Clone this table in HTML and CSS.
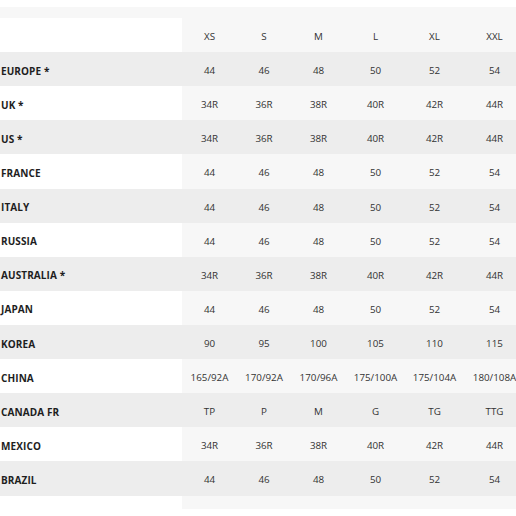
FILE: index.html
```html
<!DOCTYPE html>
<html>
<head>
<meta charset="utf-8">
<link rel="stylesheet" href="styles.css">
</head>
<body>
<div class="wrap">
  <div class="top-strip"></div>
  <table class="sizes">
    <colgroup>
      <col class="c-label">
      <col class="c1"><col class="c2"><col class="c3"><col class="c4"><col class="c5"><col class="c6">
    </colgroup>
    <thead>
      <tr class="light"><th class="label"></th><th>XS</th><th>S</th><th>M</th><th>L</th><th>XL</th><th>XXL</th></tr>
    </thead>
    <tbody>
      <tr class="dark"><th class="label">EUROPE *</th><td>44</td><td>46</td><td>48</td><td>50</td><td>52</td><td>54</td></tr>
      <tr class="light"><th class="label">UK *</th><td>34R</td><td>36R</td><td>38R</td><td>40R</td><td>42R</td><td>44R</td></tr>
      <tr class="dark"><th class="label">US *</th><td>34R</td><td>36R</td><td>38R</td><td>40R</td><td>42R</td><td>44R</td></tr>
      <tr class="light"><th class="label">FRANCE</th><td>44</td><td>46</td><td>48</td><td>50</td><td>52</td><td>54</td></tr>
      <tr class="dark"><th class="label">ITALY</th><td>44</td><td>46</td><td>48</td><td>50</td><td>52</td><td>54</td></tr>
      <tr class="light"><th class="label">RUSSIA</th><td>44</td><td>46</td><td>48</td><td>50</td><td>52</td><td>54</td></tr>
      <tr class="dark"><th class="label">AUSTRALIA *</th><td>34R</td><td>36R</td><td>38R</td><td>40R</td><td>42R</td><td>44R</td></tr>
      <tr class="light"><th class="label">JAPAN</th><td>44</td><td>46</td><td>48</td><td>50</td><td>52</td><td>54</td></tr>
      <tr class="dark"><th class="label">KOREA</th><td>90</td><td>95</td><td>100</td><td>105</td><td>110</td><td>115</td></tr>
      <tr class="light"><th class="label">CHINA</th><td>165/92A</td><td>170/92A</td><td>170/96A</td><td>175/100A</td><td>175/104A</td><td>180/108A</td></tr>
      <tr class="dark"><th class="label">CANADA FR</th><td>TP</td><td>P</td><td>M</td><td>G</td><td>TG</td><td>TTG</td></tr>
      <tr class="light"><th class="label">MEXICO</th><td>34R</td><td>36R</td><td>38R</td><td>40R</td><td>42R</td><td>44R</td></tr>
      <tr class="dark"><th class="label">BRAZIL</th><td>44</td><td>46</td><td>48</td><td>50</td><td>52</td><td>54</td></tr>
    </tbody>
    <tfoot>
      <tr class="light spacer"><th class="label"></th><td></td><td></td><td></td><td></td><td></td><td></td></tr>
    </tfoot>
  </table>
</div>
</body>
</html>
```

FILE: styles.css
```css
html, body {
  margin: 0;
  padding: 0;
  background: #ffffff;
}
body {
  font-family: "Open Sans", "Liberation Sans", sans-serif;
  overflow: hidden;
}
.wrap {
  margin-top: 7px;
  width: 516px;
  overflow: hidden;
}
.top-strip {
  height: 11px;
  background: #f7f7f7;
}
.sizes {
  border-collapse: collapse;
  table-layout: fixed;
  width: 525px;
}
.c-label { width: 182px; }
.c1 { width: 55px; }
.c2 { width: 54px; }
.c3 { width: 55px; }
.c4 { width: 59px; }
.c5 { width: 59px; }
.c6 { width: 61px; }
.sizes th, .sizes td {
  box-sizing: border-box;
  height: 34.12px;
  padding: 3px 0 0 0;
  text-align: center;
  vertical-align: middle;
  font-size: 9.8px;
  font-weight: 400;
  color: #333333;
  white-space: nowrap;
}
.sizes th.label {
  text-align: left;
  padding-left: 1px;
  font-size: 10px;
  font-weight: 700;
  color: #1e1e1e;
  letter-spacing: 0.1px;
}
.light th, .light td { background: #f7f7f7; }
.light th.label { background: #ffffff; }
.dark th, .dark td { background: #ededed; }
.spacer th, .spacer td { height: 13px; padding: 0; }
```
